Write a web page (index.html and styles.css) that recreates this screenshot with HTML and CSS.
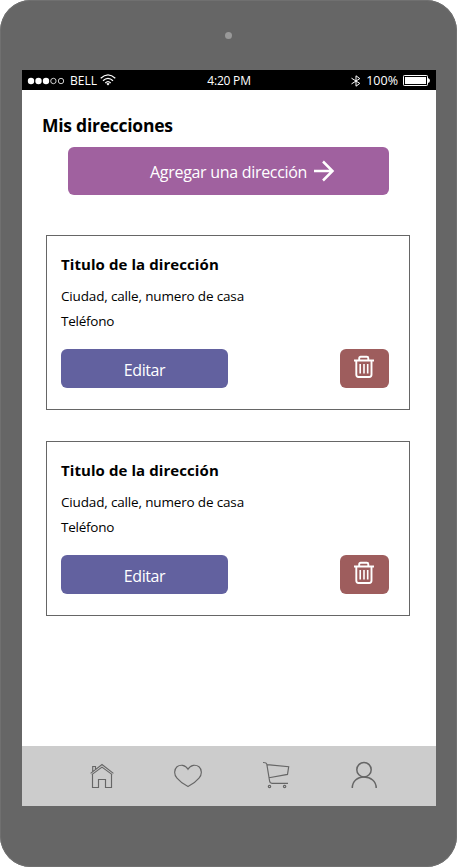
FILE: index.html
```html
<!DOCTYPE html>
<html lang="es">
<head>
<meta charset="utf-8">
<title>Mis direcciones</title>
<link rel="stylesheet" href="styles.css">
</head>
<body>
<svg class="defs" width="0" height="0" aria-hidden="true">
  <symbol id="trash" viewBox="0 0 22 24">
    <g fill="none" stroke="#fff" stroke-linejoin="round">
      <path stroke-width="1.9" d="M1 5.5H21M6.2 5V3.2Q6.2 1.7 7.7 1.7H13.8Q15.3 1.7 15.3 3.2V5M3.3 6V19.5Q3.3 22 5.5 22H16.2Q18.5 22 18.5 19.5V6"/>
      <path stroke-width="1.6" d="M7.2 9V18.5M11 9V18.5M14.7 9V18.5"/>
    </g>
  </symbol>
</svg>
<main class="device">
  <div class="bezel"><span class="camera"></span></div>
  <div class="screen">
    <header class="status">
      <div class="status-left">
        <svg width="38" height="8" viewBox="0 0 38 8"><g fill="#fff"><circle cx="4" cy="4" r="3.2"/><circle cx="11.5" cy="4" r="3.2"/><circle cx="19" cy="4" r="3.2"/></g><g fill="none" stroke="#fff" stroke-width=".8"><circle cx="26.4" cy="4" r="2.7"/><circle cx="34" cy="4" r="2.7"/></g></svg>
        <span class="carrier">BELL</span>
        <svg width="16" height="12" viewBox="0 0 16 12"><g fill="none" stroke="#fff" stroke-width="1.2"><path d="M.7 4.2Q8-2.6 15.3 4.2M3 6.7Q8 2 13 6.7M5.3 9Q8 6.4 10.7 9"/></g><path fill="#fff" d="M6.3 9.7Q8 8.3 9.7 9.7L8 11.5Z"/></svg>
      </div>
      <span class="time">4:20 PM</span>
      <div class="status-right">
        <svg width="10" height="12" viewBox="0 0 10 12"><path fill="none" stroke="#fff" d="M.5 3.2L8.8 8.4L5 11.2V.8L8.8 3.6L.5 8.9"/></svg>
        <span class="percent">100%</span>
        <svg width="28" height="11" viewBox="0 0 28 11"><rect x=".5" y=".5" width="24" height="10" rx=".8" fill="none" stroke="#fff"/><path fill="#fff" d="M2 2H23V9H2ZM25 3Q27 3.5 27 5.5Q27 7.5 25 8Z"/></svg>
      </div>
    </header>
    <section class="content">
      <h1>Mis direcciones</h1>
      <button class="add"><span>Agregar una dirección</span>
        <svg width="22" height="22" viewBox="0 0 22 22"><path fill="none" stroke="#fff" stroke-width="2.5" d="M1 11H20M10 1.5L19.5 11L10 20.5"/></svg>
      </button>
      <div class="cards">
        <article class="card">
          <h2>Titulo de la dirección</h2>
          <p class="place">Ciudad, calle, numero de casa</p>
          <p class="phone">Teléfono</p>
          <div class="actions">
            <button class="edit">Editar</button>
            <button class="delete" aria-label="Eliminar"><svg width="22" height="24"><use href="#trash"/></svg></button>
          </div>
        </article>
        <article class="card">
          <h2>Titulo de la dirección</h2>
          <p class="place">Ciudad, calle, numero de casa</p>
          <p class="phone">Teléfono</p>
          <div class="actions">
            <button class="edit">Editar</button>
            <button class="delete" aria-label="Eliminar"><svg width="22" height="24"><use href="#trash"/></svg></button>
          </div>
        </article>
      </div>
    </section>
    <nav class="tabs">
      <svg width="30" height="30" viewBox="0 0 30 30"><path d="M7.5 14.5V27.5H13.5V19.5H20.5V27.5H26.5V14.5M5.6 13.4L17 4.6L28.4 13.4M6.8 14.6L17 7.1L27.2 14.6M7.7 11.5V6.5H10.5V9"/></svg>
      <svg width="30" height="30" viewBox="0 0 30 30"><path d="M15 9.3C12.5 4.5 7 4.3 4 6.8C.8 9.7.9 14.4 4 18.2C7 21.8 11 24.7 15 26.5C19 24.7 23 21.8 26 18.2C29.1 14.4 29.2 9.7 26 6.8C23 4.3 17.5 4.5 15 9.3Z"/></svg>
      <svg width="30" height="30" viewBox="0 0 30 30"><path d="M2 2.5Q5.5 2.5 5.8 4.2L8.5 20.5Q8.8 23.3 11 23.3H27M6 4.6L27.7 6.7L26.5 14.4L8 17.7"/><circle cx="8.5" cy="26.5" r="1.2"/><circle cx="23.6" cy="26.5" r="1.2"/></svg>
      <svg width="30" height="30" viewBox="0 0 30 30"><g stroke-width="1.5"><circle cx="15" cy="9.7" r="7.2"/><path d="M3.3 28C3.3 21.5 8.2 16.9 15 16.9S27.2 21.5 27.2 28"/></g></svg>
    </nav>
  </div>
</main>
</body>
</html>
```

FILE: styles.css
```css
* { box-sizing: border-box; }
body { margin: 0; background: #fff; color: #000; font-family: "Open Sans", "Noto Sans", sans-serif; }
h1, h2, p { margin: 0; white-space: nowrap; }
svg { display: block; flex: none; }
.defs { position: absolute; }
button { border: 0; padding: 0; color: #fff; font: inherit; border-radius: 6px; white-space: nowrap; }

.device { width: 457px; height: 867px; padding: 0 21px 0 22px; background: #666; border-radius: 31px; box-shadow: inset 0 0 0 1px #707070; }
.bezel { height: 70px; padding: 32px 0 0 203px; }
.camera { display: block; width: 7px; height: 7px; border-radius: 50%; background: #999; }
.screen { display: flex; flex-direction: column; height: 736px; background: #fff; }

.status { display: grid; grid-template-columns: 1fr auto 1fr; align-items: center; height: 20px; padding: 0 5px; background: #000; color: #fff; font-size: 12px; line-height: 20px; }
.status-left, .status-right { display: flex; align-items: center; }
.status-left svg:last-child { margin-bottom: 2px; }
.status-right { justify-content: flex-end; }
.carrier { width: 27px; margin: 0 3px 0 5px; font-size: 12px; letter-spacing: 0; font-weight: 500; }
.time { padding-top: 1px; letter-spacing: -.2px; }
.percent { margin: 1px 5px 0 5px; font-size: 12.5px; font-weight: 500; letter-spacing: 0; }

.content { flex: 1; padding: 21px 26px 0 20px; }
h1 { font-size: 17.5px; line-height: 28px; font-weight: 700; letter-spacing: -.25px; }
.add { display: flex; align-items: center; width: 321px; height: 48px; margin: 8px 0 0 26px; padding: 0 0 0 82px; background: #a0619f; font-size: 16px; letter-spacing: -.3px; }
.add span { width: 163px; text-align: left; padding-top: 2px; }
.cards { display: grid; gap: 31px; margin: 40px 0 0 4px; }
.card { width: 364px; height: 175px; padding: 16px 20px 0 14px; border: 1px solid #666; }
h2 { font-size: 15px; line-height: 24px; font-weight: 700; letter-spacing: .08px; }
.place { margin-top: 8px; font-size: 13.5px; line-height: 25px; letter-spacing: -.16px; }
.phone { font-size: 13.5px; line-height: 25px; letter-spacing: -.25px; }
.actions { display: flex; justify-content: space-between; margin-top: 15px; }
.edit { width: 167px; height: 39px; padding-top: 2px; background: #62619f; font-size: 16px; letter-spacing: -.4px; }
.delete { display: flex; justify-content: center; width: 49px; height: 39px; padding: 6px 1px 0 0; background: #9e5d5d; }

.tabs { display: flex; gap: 58px; height: 60px; padding: 14px 0 0 63px; background: #ccc; }
.tabs svg { fill: none; stroke: #666; stroke-width: 1.15; }
```
